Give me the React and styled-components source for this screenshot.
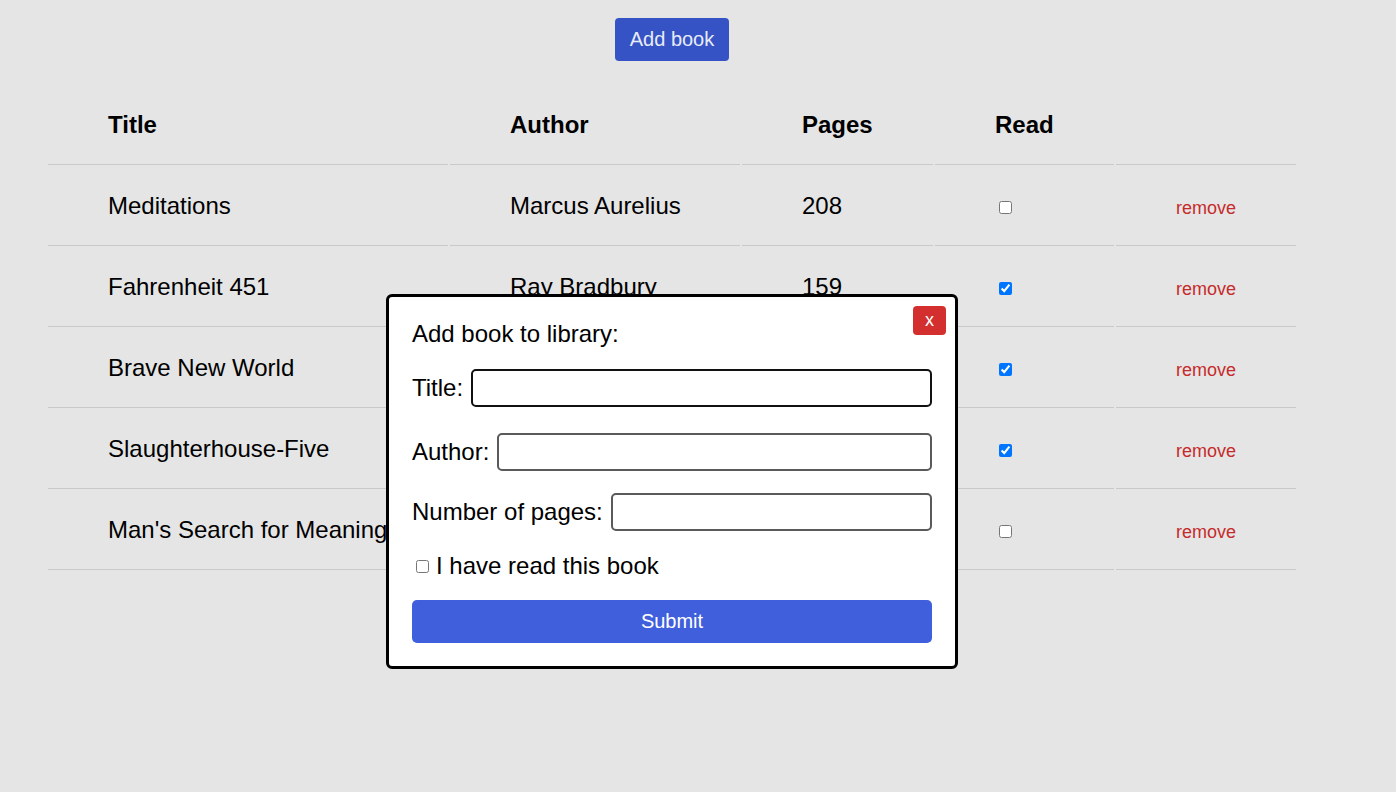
import { useState } from "react";
import styled, { createGlobalStyle } from "styled-components";

const GlobalStyle = createGlobalStyle`
    * {
        box-sizing: border-box;
    }
    html, body {
        min-height: 100vh;
    }
    body {
        margin: 0;
        background-color: #e5e5e5;
        font-family: "Liberation Sans", Arial, sans-serif;
        color: #000;
    }
`;

const initialBooks = [
    { title: "Meditations", author: "Marcus Aurelius", pages: 208, read: false },
    { title: "Fahrenheit 451", author: "Ray Bradbury", pages: 159, read: true },
    { title: "Brave New World", author: "Aldous Huxley", pages: 311, read: true },
    { title: "Slaughterhouse-Five", author: "Kurt Vonnegut", pages: 275, read: true },
    { title: "Man's Search for Meaning", author: "Viktor Frankl", pages: 165, read: false },
];

const App = () => {
    const [books, setBooks] = useState(initialBooks);
    const [showForm, setShowForm] = useState(true);

    // Remove a book from the list by index
    const removeBook = (index) => {
        setBooks(books.filter((_, i) => i !== index));
    };

    return (
        <>
            <GlobalStyle />
            <Page>
                <AddButton onClick={() => setShowForm(true)}>Add book</AddButton>
                <Table>
                    <thead>
                        <tr>
                            <Th $width={400}>Title</Th>
                            <Th $width={290}>Author</Th>
                            <Th $width={191}>Pages</Th>
                            <Th $width={179}>Read</Th>
                            <Th $width={180}></Th>
                        </tr>
                    </thead>
                    <tbody>
                        {books.map((book, i) => (
                            <tr key={book.title}>
                                <Td>{book.title}</Td>
                                <Td>{book.author}</Td>
                                <Td>{book.pages}</Td>
                                <Td>
                                    <input type="checkbox" defaultChecked={book.read} />
                                </Td>
                                <Td>
                                    <RemoveButton onClick={() => removeBook(i)}>remove</RemoveButton>
                                </Td>
                            </tr>
                        ))}
                    </tbody>
                </Table>

                {showForm && (
                    <Modal>
                        <CloseButton onClick={() => setShowForm(false)}>x</CloseButton>
                        <Heading>Add book to library:</Heading>
                        <Row $top={21}>
                            <Label>Title:</Label>
                            <Input type="text" $focused />
                        </Row>
                        <Row $top={26}>
                            <Label>Author:</Label>
                            <Input type="text" />
                        </Row>
                        <Row $top={22}>
                            <Label>Number of pages:</Label>
                            <Input type="text" />
                        </Row>
                        <CheckRow $top={21}>
                            <input type="checkbox" />
                            <span>I have read this book</span>
                        </CheckRow>
                        <SubmitButton>Submit</SubmitButton>
                    </Modal>
                )}
            </Page>
        </>
    );
};

export default App;

const Page = styled.div`
    position: relative;
    width: 1252px;
    min-height: 792px;
    margin-left: 46px;
    padding-top: 18px;
    display: flex;
    flex-direction: column;
    align-items: center;
`;

const AddButton = styled.button`
    font-family: inherit;
    font-size: 20px;
    line-height: 23px;
    padding: 10px 15px;
    border: none;
    border-radius: 4px;
    background-color: #3553c4;
    color: #e8ebf8;
    cursor: pointer;
`;

const Table = styled.table`
    width: 1252px;
    margin-top: 23px;
    table-layout: fixed;
    border-collapse: separate;
    border-spacing: 2px 0;
`;

const Th = styled.th`
    width: ${(p) => p.$width}px;
    height: 81px;
    padding: 2px 0 0 60px;
    text-align: left;
    font-size: 24px;
    font-weight: bold;
    vertical-align: middle;
    border-bottom: 1px solid #c9c9c9;
`;

const Td = styled.td`
    height: 81px;
    padding: 2px 0 0 60px;
    font-size: 24px;
    vertical-align: middle;
    border-bottom: 1px solid #c9c9c9;
`;

const RemoveButton = styled.button`
    font-family: inherit;
    font-size: 18px;
    padding: 0;
    border: none;
    background: none;
    color: #c52b2b;
    cursor: pointer;
`;

const Modal = styled.div`
    position: absolute;
    top: 294px;
    left: 340px;
    width: 572px;
    height: 375px;
    padding: 23px;
    background-color: #fff;
    border: 3px solid #000;
    border-radius: 6px;
    display: flex;
    flex-direction: column;
`;

const CloseButton = styled.button`
    position: absolute;
    top: 9px;
    right: 9px;
    width: 33px;
    height: 29px;
    padding: 0;
    border: none;
    border-radius: 4px;
    background-color: #d32f2f;
    color: #fff;
    font-family: inherit;
    font-size: 18px;
    cursor: pointer;
`;

const Heading = styled.h2`
    margin: 0;
    font-size: 24px;
    font-weight: normal;
    line-height: 28px;
`;

const Row = styled.div`
    display: flex;
    align-items: center;
    gap: 8px;
    margin-top: ${(p) => p.$top}px;
`;

const Label = styled.label`
    font-size: 24px;
    white-space: nowrap;
`;

const Input = styled.input`
    flex: 1;
    height: 38px;
    padding: 0 6px;
    font-family: inherit;
    font-size: 20px;
    border: 2px solid ${(p) => (p.$focused ? "#111" : "#5a5a5a")};
    border-radius: 5px;
    outline: none;
`;

const CheckRow = styled.label`
    display: flex;
    align-items: center;
    gap: 4px;
    margin-top: ${(p) => p.$top}px;
    font-size: 24px;
    line-height: 28px;
`;

const SubmitButton = styled.button`
    margin-top: 20px;
    width: 100%;
    height: 43px;
    border: none;
    border-radius: 5px;
    background-color: #3f5fdc;
    color: #fff;
    font-family: inherit;
    font-size: 20px;
    cursor: pointer;
`;
